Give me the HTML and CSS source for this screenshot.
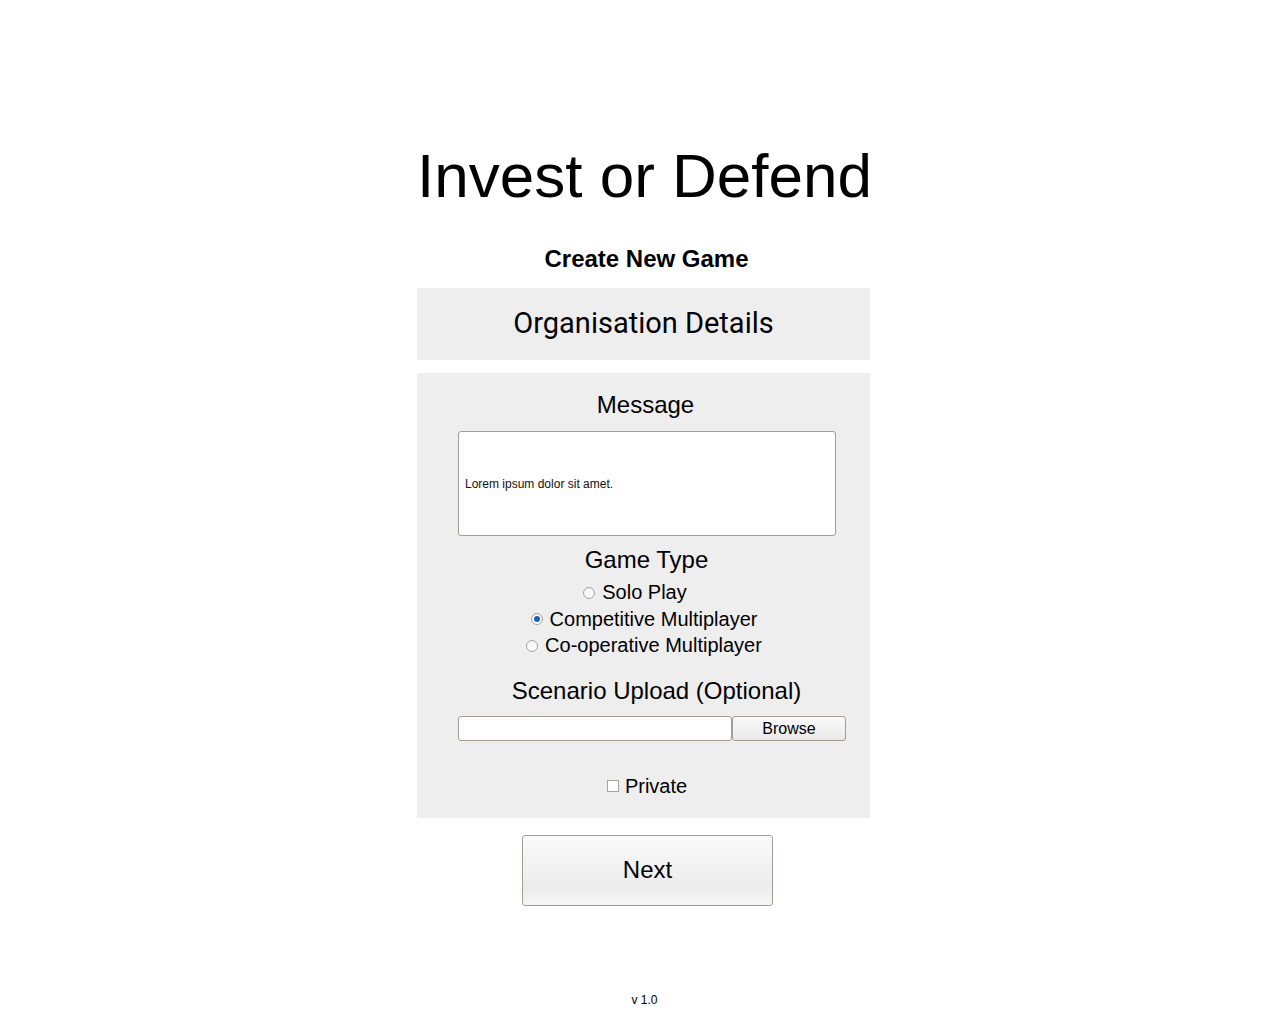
FILE: index.html
```html
<!DOCTYPE html>
<html>
<head>
<meta charset="utf-8">
<title>Invest or Defend</title>
<link rel="stylesheet" href="styles.css">
</head>
<body>
<div class="page">
  <h1 class="title">Invest or Defend</h1>
  <h2 class="subtitle">Create New Game</h2>
  <div class="panel panel-head">Organisation Details</div>
  <div class="panel panel-body">
    <div class="label label-msg">Message</div>
    <div class="textarea">Lorem ipsum dolor sit amet.</div>
    <div class="label label-gt">Game Type</div>
    <div class="radios">
      <label class="radio-row radio-solo"><span class="radio"></span>Solo Play</label>
      <label class="radio-row"><span class="radio checked"></span>Competitive Multiplayer</label>
      <label class="radio-row"><span class="radio"></span>Co-operative Multiplayer</label>
    </div>
    <div class="label label-sc">Scenario Upload (Optional)</div>
    <div class="file">
      <div class="file-field"></div>
      <div class="file-btn">Browse</div>
    </div>
    <label class="check-row"><span class="check"></span>Private</label>
  </div>
  <div class="next-wrap"><div class="next">Next</div></div>
  <div class="version">v 1.0</div>
</div>
</body>
</html>
```
FILE: styles.css
```css
html, body {
  margin: 0;
  padding: 0;
  background: #ffffff;
}
body {
  padding-left: 7px;
  font-family: "Liberation Sans", Arial, sans-serif;
  color: #000;
}
.page {
  width: 453px;
  margin: 0 auto;
  display: flex;
  flex-direction: column;
}
.title {
  margin: 139px -10px 0 -10px;
  font-size: 62px;
  line-height: 74px;
  font-weight: normal;
  text-align: center;
  padding-left: 2px;
}
.subtitle {
  margin: 32px 0 0 0;
  font-size: 24px;
  line-height: 28px;
  font-weight: bold;
  text-align: center;
  padding-left: 6px;
}
.panel {
  background: #eeeeee;
}
.panel-head {
  margin-top: 15px;
  height: 72px;
  display: flex;
  align-items: center;
  justify-content: center;
  font-family: Roboto, "Liberation Sans", sans-serif;
  font-size: 29px;
  padding-bottom: 2px;
  box-sizing: border-box;
}
.panel-body {
  margin-top: 13px;
  padding: 18px 0 19px 0;
  display: flex;
  flex-direction: column;
  align-items: center;
}
.label {
  font-size: 24px;
  line-height: 28px;
  text-align: center;
}
.label-msg {
  padding-left: 4px;
}
.textarea {
  margin: 12px 0 0 41px;
  align-self: flex-start;
  height: 103px;
  background: #fff;
  border: 1px solid #a39d92;
  border-radius: 3px;
  display: flex;
  align-items: center;
  padding-left: 6px;
  box-sizing: content-box;
  width: 370px;
  font-size: 12px;
  color: #111;
}
.label-gt {
  margin-top: 10px;
  padding-left: 6px;
}
.radios {
  margin-top: 5px;
  display: flex;
  flex-direction: column;
  align-items: center;
  padding-left: 1px;
}
.radio-row {
  font-size: 20px;
  line-height: 26.5px;
  display: flex;
  align-items: center;
}
.radio-solo {
  padding-right: 18px;
}
.radio {
  width: 10px;
  height: 10px;
  border: 1px solid #a8a49c;
  border-radius: 50%;
  background: linear-gradient(#f2f2f2, #ffffff);
  margin-right: 7px;
  margin-top: 1px;
  position: relative;
}
.radio.checked::after {
  content: "";
  position: absolute;
  left: 2px;
  top: 2px;
  width: 6px;
  height: 6px;
  border-radius: 50%;
  background: #1a5fc8;
}
.label-sc {
  margin-top: 18px;
  padding-left: 26px;
}
.file {
  margin: 11px 0 0 41px;
  align-self: flex-start;
  display: flex;
  height: 25px;
}
.file-field {
  width: 272px;
  height: 23px;
  background: #fff;
  border: 1px solid #a39d92;
  border-radius: 3px;
}
.file-btn {
  width: 112px;
  height: 23px;
  border: 1px solid #a39d92;
  border-radius: 3px;
  background: linear-gradient(#fafafa, #e9e9e9);
  font-size: 16px;
  line-height: 23px;
  text-align: center;
}
.check-row {
  margin-top: 32px;
  font-size: 20px;
  line-height: 26px;
  display: flex;
  align-items: center;
  padding-left: 7px;
}
.check {
  width: 10px;
  height: 10px;
  border: 1px solid #a8a49c;
  background: #fff;
  margin-right: 6px;
}
.next-wrap {
  margin-top: 17px;
  display: flex;
}
.next {
  margin-left: 105px;
  width: 249px;
  height: 69px;
  border: 1px solid #a39d92;
  border-radius: 3px;
  background: linear-gradient(#fafafa 0%, #ececec 75%, #f6f6f6 100%);
  font-size: 24px;
  display: flex;
  align-items: center;
  justify-content: center;
}
.version {
  margin-top: 87px;
  font-size: 12px;
  line-height: 14px;
  text-align: center;
  padding-left: 2px;
}
```
